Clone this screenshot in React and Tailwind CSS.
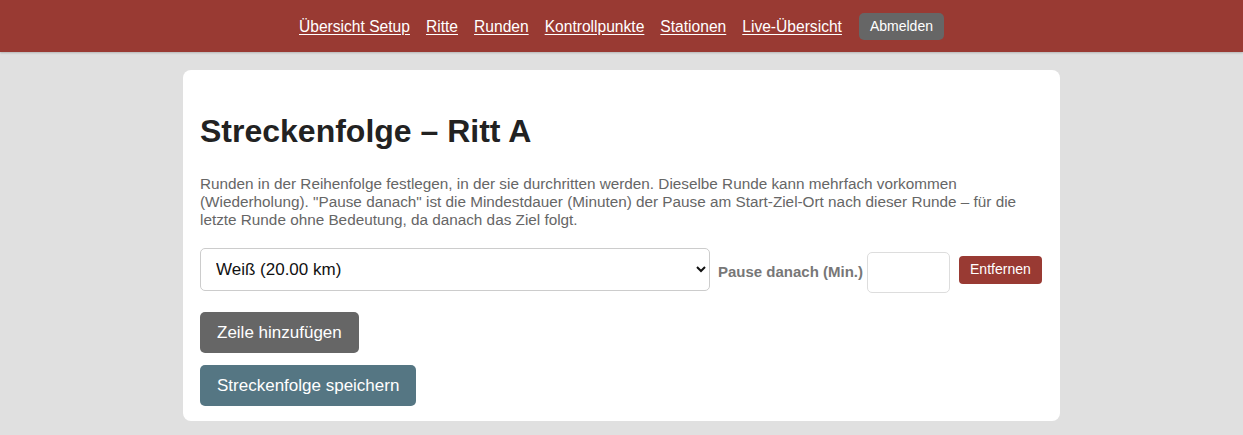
const navLinks = ['Übersicht Setup', 'Ritte', 'Runden', 'Kontrollpunkte', 'Stationen', 'Live-Übersicht'];

export default function App() {
  return (
    <div className="min-h-[435px] bg-[#e0e0e0] font-['Liberation_Sans',Arial,sans-serif]">
      <header className="h-[52px] bg-[#993a33] flex items-center justify-center gap-[16px] shadow-[0_1px_2px_rgba(0,0,0,0.2)]">
        {navLinks.map((l) => (
          <a key={l} href="#" className="mt-[1px] text-white text-[15.6px] underline underline-offset-2">
            {l}
          </a>
        ))}
        <button className="ml-[1px] h-[27px] px-[11px] rounded-[5px] bg-[#666666] text-white text-[14px]">
          Abmelden
        </button>
      </header>

      <main className="pt-[18px] flex justify-center">
        <div className="w-[877px] bg-white rounded-[8px] px-[17px] pt-[42px] pb-[15px]">
          <h1 className="text-[32px] font-bold text-[#222] leading-[38px]">Streckenfolge – Ritt A</h1>

          <p className="mt-[25px] text-[15.3px] leading-[18px] text-[#666]">
            Runden in der Reihenfolge festlegen, in der sie durchritten werden. Dieselbe Runde kann mehrfach vorkommen
            (Wiederholung). "Pause danach" ist die Mindestdauer (Minuten) der Pause am Start-Ziel-Ort nach dieser Runde – für die{' '}
            <br />
            letzte Runde ohne Bedeutung, da danach das Ziel folgt.
          </p>

          <div className="mt-[17px] flex items-center gap-[8px]">
            <select className="w-[510px] h-[43px] rounded-[5px] border border-[#ccc] bg-white px-[11px] text-[17px] text-[#111]">
              <option>Weiß (20.00 km)</option>
            </select>
            <label className="text-[15px] font-bold text-[#777] mt-[6px]">Pause danach (Min.)</label>
            <input className="mt-[6px] -ml-[4px] w-[83px] h-[41px] rounded-[5px] border border-[#ddd]" />
            <button className="ml-[1px] h-[28px] px-[11px] rounded-[4px] bg-[#993a33] text-white text-[14px]">
              Entfernen
            </button>
          </div>

          <div className="mt-[19px] flex flex-col items-start gap-[12px]">
            <button className="h-[41px] px-[17px] rounded-[5px] bg-[#666666] text-white text-[17px]">
              Zeile hinzufügen
            </button>
            <button className="h-[41px] px-[17px] rounded-[5px] bg-[#557683] text-white text-[17px]">
              Streckenfolge speichern
            </button>
          </div>
        </div>
      </main>
    </div>
  );
}
